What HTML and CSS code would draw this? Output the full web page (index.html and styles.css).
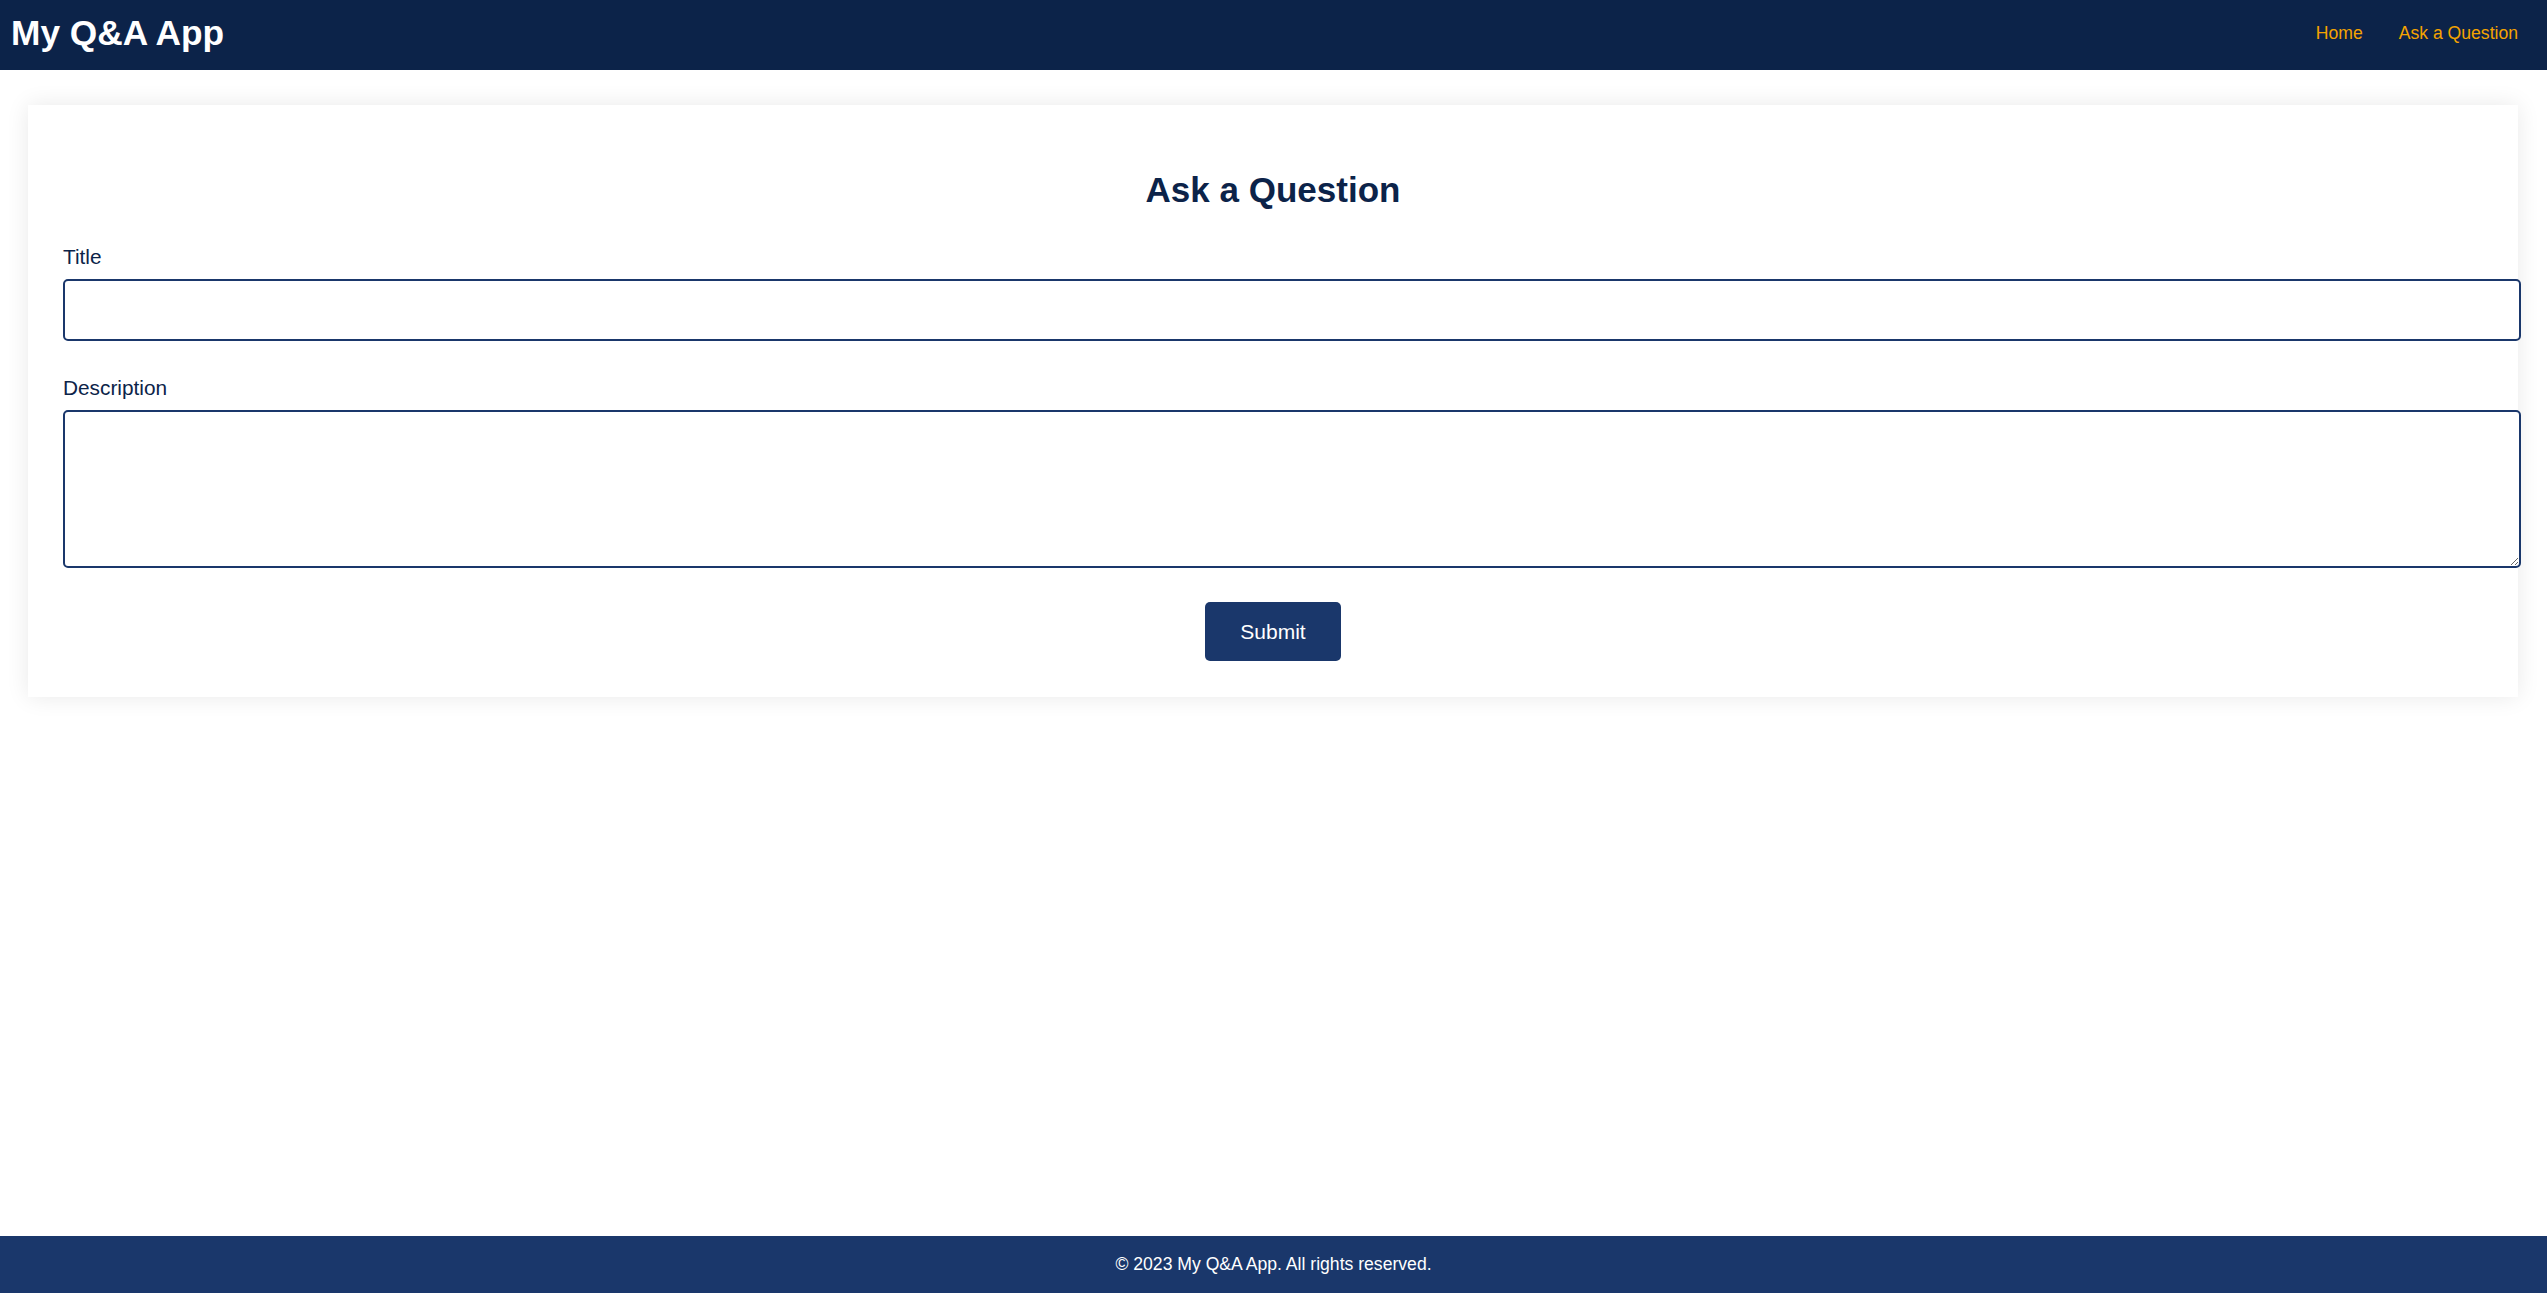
FILE: index.html
```html
<!DOCTYPE html>
<html lang="en">
<head>
<meta charset="utf-8">
<title>My Q&amp;A App</title>
<link rel="stylesheet" href="styles.css">
</head>
<body>
<header class="site-header">
  <h1 class="brand">My Q&amp;A App</h1>
  <nav class="nav">
    <a class="nav-link" href="#">Home</a>
    <a class="nav-link" href="#">Ask a Question</a>
  </nav>
</header>
<main class="main">
  <section class="card">
    <h2 class="card-title">Ask a Question</h2>
    <form class="form">
      <div class="form-group">
        <label class="label" for="title">Title</label>
        <input class="field field-input" id="title" type="text">
      </div>
      <div class="form-group">
        <label class="label" for="desc">Description</label>
        <textarea class="field field-area" id="desc"></textarea>
      </div>
      <div class="actions">
        <button class="btn" type="button">Submit</button>
      </div>
    </form>
  </section>
</main>
<footer class="site-footer">
  <p class="footer-text">&copy; 2023 My Q&amp;A App. All rights reserved.</p>
</footer>
</body>
</html>
```

FILE: styles.css
```css
* { margin: 0; }
html, body { height: 100%; }
body {
  margin: 0;
  font-family: "Liberation Sans", Arial, sans-serif;
  background: #ffffff;
  display: flex;
  flex-direction: column;
  min-height: 100vh;
}
.site-header {
  height: 70px;
  box-sizing: border-box;
  background: #0c2349;
  display: flex;
  align-items: center;
  justify-content: space-between;
  padding: 0 29px 4px 11px;
}
.brand {
  color: #ffffff;
  font-size: 35.3px;
  font-weight: bold;
  margin: 0;
}
.nav { display: flex; align-items: center; }
.nav-link {
  color: #f5a300;
  text-decoration: none;
  font-size: 17.6px;
  margin-left: 36px;
}
.main {
  flex: 1;
  padding: 35px 29px 0 28px;
}
.card {
  background: #ffffff;
  box-shadow: 0 0 22px rgba(0, 0, 0, 0.09);
  padding: 65px 35px 36px 35px;
}
.card-title {
  text-align: center;
  color: #0c2349;
  font-size: 35px;
  font-weight: bold;
  margin: 0 0 35px 0;
  line-height: 40px;
}
.form-group { margin-bottom: 34.5px; }
.label {
  display: block;
  color: #0c2349;
  font-size: 20.8px;
  line-height: 24px;
  margin-bottom: 10px;
}
.field {
  display: block;
  width: 100%;
  box-sizing: content-box;
  border: 2px solid #1a376b;
  border-radius: 5px;
  padding: 17px;
  font-family: "Liberation Sans", Arial, sans-serif;
  font-size: 19px;
  background: #ffffff;
  outline: none;
}
.field-input { height: 24px; }
.field-area { height: 120px; resize: vertical; }
.actions {
  display: flex;
  justify-content: center;
}
.btn {
  height: 59px;
  padding: 0 35px;
  background: #1a376b;
  color: #ffffff;
  border: none;
  border-radius: 5px;
  font-family: "Liberation Sans", Arial, sans-serif;
  font-size: 21px;
}
.site-footer {
  height: 57px;
  background: #1a376b;
  display: flex;
  align-items: center;
  justify-content: center;
}
.footer-text {
  color: #ffffff;
  font-size: 17.6px;
}
```
